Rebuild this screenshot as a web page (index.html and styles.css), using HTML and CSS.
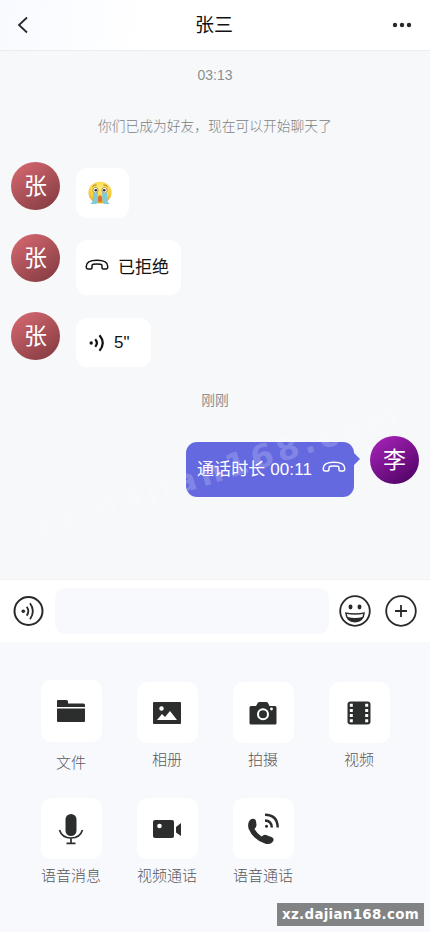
FILE: index.html
```html
<!DOCTYPE html>
<html lang="zh-CN">
<head>
<meta charset="utf-8">
<meta name="viewport" content="width=device-width, initial-scale=1">
<title>张三</title>
<link rel="stylesheet" href="styles.css">
</head>
<body>
<svg class="defs" width="0" height="0">
  <symbol id="handset" viewBox="0 0 24 12"><path d="M1.3 7.2C1.3 3 6 1.2 12 1.2S22.700 3 22.700 7.200V8.500Q22.700 9.900 21.300 9.900H18.200Q17 9.900 17 8.700V7Q17 5.600 15.700 5.300Q12 4.700 8.300 5.300Q7 5.600 7 7V8.700Q7 9.900 5.800 9.900H2.700Q1.300 9.900 1.300 8.500Z" fill="none" stroke="currentColor" stroke-width="1.500"/></symbol>
</svg>
<div class="app">
  <header class="header">
    <svg class="back" width="12" height="18" viewBox="0 0 12 18"><path d="M10 1.500L2 9L10 16.500"/></svg>
    <h1 class="title">张三</h1>
    <svg class="more" width="20" height="6" viewBox="0 0 20 6"><circle cx="3" cy="3" r="2.200"/><circle cx="10" cy="3" r="2.200"/><circle cx="17" cy="3" r="2.200"/></svg>
  </header>

  <main class="chat">
    <p class="note time">03:13</p>
    <p class="note notice">你们已成为好友，现在可以开始聊天了</p>
    <div class="message first">
      <div class="avatar">张</div>
      <div class="bubble emoji">
        <svg width="24" height="24" viewBox="0 0 24 24">
          <defs><radialGradient id="face" cx=".5" cy=".3" r=".7"><stop offset="0" stop-color="#ffed78"/><stop offset=".7" stop-color="#f8cf3d"/><stop offset="1" stop-color="#dca126"/></radialGradient></defs>
          <ellipse cx="12" cy="11.500" rx="11.500" ry="10.800" fill="url(#face)"/>
          <path d="M4.500 5.500Q6.500 3.500 8.500 4M15.500 4Q17.800 3.700 19.500 5.600" fill="none" stroke="#a97823"/>
          <ellipse cx="7.500" cy="9.200" rx="2.600" ry="2.800" fill="#fff" stroke="#8b743a" stroke-width=".7"/>
          <ellipse cx="16.500" cy="9.200" rx="2.600" ry="2.800" fill="#fff" stroke="#8b743a" stroke-width=".7"/>
          <circle cx="7.800" cy="9.200" r="1.300" fill="#342d24"/><circle cx="16.200" cy="9.200" r="1.300" fill="#342d24"/>
          <path d="M5 11.500Q7.500 13 9.800 11.500V18Q9.500 20 8.500 23H2.500Q5.500 20 5 17ZM14.200 11.500Q16.500 13 19 11.500V17Q18.500 20 21.500 23H15.500Q14.500 20 14.200 18Z" fill="#80cbd5"/>
          <path d="M10 16Q12 12.500 14 16V20Q12 22 10 20Z" fill="#e76c25"/>
        </svg>
      </div>
    </div>
    <div class="message second">
      <div class="avatar">张</div>
      <div class="bubble call"><svg width="24" height="12"><use href="#handset"/></svg><span>已拒绝</span></div>
    </div>
    <div class="message third">
      <div class="avatar">张</div>
      <div class="bubble voice">
        <svg width="16" height="18" viewBox="0 0 16 18"><circle cx="2.200" cy="9" r="1.700" fill="#111"/><path d="M6.200 5.200Q9.600 9 6.200 12.800M10.500 1.200Q17 9 10.500 16.800" fill="none" stroke="#111" stroke-width="2.200"/></svg><span>5"</span>
      </div>
    </div>
    <p class="note recent">刚刚</p>
    <div class="message own">
      <div class="bubble"><span>通话时长 00:11</span><svg width="24" height="12"><use href="#handset"/></svg></div>
      <div class="avatar">李</div>
    </div>
    <div class="watermark">xz.dajian168.com</div>
  </main>

  <section class="composer">
    <svg width="32" height="32" viewBox="0 0 32 32"><circle cx="16.500" cy="16" r="14" fill="none" stroke="#292929" stroke-width="2"/><circle cx="11.300" cy="16.300" r="1.800" fill="#292929"/><path d="M14.700 11.800Q18 16.200 14.700 20.600M18 8.300Q23.800 16.200 18 24.200" fill="none" stroke="#292929" stroke-width="1.800"/></svg>
    <div class="input"></div>
    <svg class="smile" width="32" height="32" viewBox="0 0 32 32"><circle cx="16" cy="16" r="14.800" fill="none" stroke="#292929" stroke-width="1.800"/><ellipse cx="11.500" cy="12" rx="2" ry="2.400" fill="#292929"/><ellipse cx="20.500" cy="12" rx="2" ry="2.400" fill="#292929"/><path d="M6 17.300Q16 19.300 26 17.300Q25 27.500 16 27.500T6 17.300Z" fill="#292929"/><path d="M7.800 19.100Q16 20.600 24.200 19.100L23.300 21.900Q16 23.900 8.700 21.900Z" fill="#fff"/></svg>
    <svg class="plus" width="32" height="32" viewBox="0 0 32 32"><circle cx="16" cy="16" r="14.800"/><path d="M10 16H22M16 10V22"/></svg>
  </section>

  <section class="tools">
    <div class="tool file">
      <div class="tile"><svg width="28" height="24" viewBox="0 0 28 24"><path d="M0 2Q0 1 1 1H9.500Q11 1 11 2.500V4.500H26.500Q28 4.500 28 6V8H0ZM0 9.500H28V22Q28 23 27 23H1Q0 23 0 22Z"/></svg></div><span>文件</span>
    </div>
    <div class="tool">
      <div class="tile"><svg width="28" height="22" viewBox="0 0 28 22"><rect width="28" height="22" rx="1"/><circle cx="8.500" cy="6.500" r="2.200" fill="#fff"/><path d="M4 18L9 12L12 15L17 9L24 18Z" fill="#fff"/></svg></div><span>相册</span>
    </div>
    <div class="tool">
      <div class="tile"><svg width="28" height="24" viewBox="0 0 28 24"><path d="M2 5H7L9 1.500Q9.500 1 10.500 1H17.500Q18.500 1 19 2L20.500 5H26Q27.500 5 27.500 6.500V22Q27.500 23.500 26 23.500H2Q.5 23.500 .5 22V6.500Q.5 5 2 5Z"/><circle cx="14" cy="13.300" r="5" fill="none" stroke="#fff" stroke-width="2"/><circle cx="22.500" cy="8" r="1.400" fill="#fff"/></svg></div><span>拍摄</span>
    </div>
    <div class="tool">
      <div class="tile"><svg width="24" height="24" viewBox="0 0 24 24"><rect x=".5" y=".5" width="23" height="23" rx="3"/><path d="M2.800 2.800h3v3h-3zm0 5.100h3v3h-3zm0 5.200h3v3h-3zm0 5.200h3v3h-3zM18.200 2.800h3v3h-3zm0 5.100h3v3h-3zm0 5.200h3v3h-3zm0 5.200h3v3h-3z" fill="#fff"/></svg></div><span>视频</span>
    </div>
    <div class="tool">
      <div class="tile"><svg width="26" height="32" viewBox="0 0 26 32"><rect x="7.500" y="1" width="11" height="22" rx="5.500"/><path d="M1.500 17Q4 25 13 25T24.500 17M13 25V30M8.500 30.300H17.500" fill="none" stroke="#2c2e2e" stroke-width="1.700"/></svg></div><span>语音消息</span>
    </div>
    <div class="tool">
      <div class="tile"><svg width="30" height="20" viewBox="0 0 30 20"><rect x="1" y="1" width="21" height="18" rx="2"/><circle cx="7.500" cy="7" r="2.300" fill="#fff"/><path d="M24 8L29 4V17L24 13.500Z"/></svg></div><span>视频通话</span>
    </div>
    <div class="tool">
      <div class="tile"><svg width="32" height="32" viewBox="0 0 32 32"><path d="M4.500 6Q8 5 9 8L9.500 12Q9.400 14.500 7.500 16Q10 20.500 14.500 23.500Q17 21.300 19 22L25 24.200Q27.500 25.500 26 28.500Q23.500 32 18.500 30.700Q6 27 1.500 15.500Q0 8.500 4.500 6Z"/><circle cx="19.500" cy="13.200" r="1.500"/><path d="M18 7.500Q24.500 7.700 24.800 14.500M18 1.800Q30.500 2 30.700 14.500" fill="none" stroke="#2c2e2e" stroke-width="2.500"/></svg></div><span>语音通话</span>
    </div>
  </section>
  <div class="site">xz.dajian168.com</div>
</div>
</body>
</html>
```
FILE: styles.css
```css
* { box-sizing: border-box; }
body {
  margin: 0;
  font-family: "Liberation Sans", "Noto Sans CJK SC", sans-serif;
  color: #111;
}
h1, p { margin: 0; }
svg { display: block; flex: none; }
.defs { position: absolute; }
.app {
  position: relative;
  display: flex;
  flex-direction: column;
  height: 932px;
  overflow: hidden;
  background: #f8f9fd;
}
.header {
  display: flex;
  align-items: center;
  justify-content: space-between;
  height: 51px;
  padding: 0 18px 1px 17px;
  background: linear-gradient(100deg, #f8faff, #fff 35%);
  border-bottom: 1px solid #ebedef;
}
.back { fill: none; stroke: #292929; stroke-width: 1.8; }
.title { font-size: 19px; font-weight: 400; line-height: 28px; margin-left: 7px; padding-top: 2px; }
.more { fill: #292929; }
.chat {
  position: relative;
  height: 528px;
  background: #f6f8fa;
}
.note {
  text-align: center;
  color: #8b8f91;
  font-size: 13.75px;
  line-height: 20px;
}
.time { padding-top: 14px; font-size: 14px; }
.notice { margin-top: 32px; font-weight: 300; color: #7c8082; }
.message { display: flex; padding: 0 11px; gap: 16px; }
.first { margin-top: 25px; height: 72px; }
.second { height: 78px; }
.third { height: 78px; }
.avatar {
  flex: none;
  width: 49px;
  height: 48px;
  border-radius: 50%;
  background: linear-gradient(145deg, #da6b73, #7f383e);
  color: #fff;
  font-size: 23px;
  line-height: 49px;
  text-align: center;
}
.bubble {
  display: flex;
  align-items: center;
  margin-top: 6px;
  border-radius: 11px;
  background: #fff;
  font-size: 17px;
}
.emoji { width: 53px; height: 50px; padding-left: 12px; }
.call { width: 105px; height: 55px; padding: 0 0 5px 9px; gap: 9px; }
.voice { width: 75px; height: 49px; padding-left: 13px; gap: 9px; }
.recent { padding-top: 1px; }
.own { justify-content: flex-end; margin-top: 25px; }
.own .bubble {
  position: relative;
  width: 168px;
  height: 55px;
  padding: 0 0 5px 11px;
  gap: 10px;
  background: #6569e0;
  color: #fff;
  white-space: nowrap;
}
.own .bubble span { letter-spacing: .1px; }
.own .bubble::after {
  content: "";
  position: absolute;
  top: 11px;
  right: -6px;
  border: 6px solid transparent;
  border-right: 0;
  border-left-color: #6569e0;
}
.own .avatar { background: linear-gradient(145deg, #ac25bd, #48005e); }
.watermark {
  position: absolute;
  left: 38px;
  top: 459px;
  transform: rotate(-17.5deg);
  transform-origin: 0 100%;
  font: bold 32px/36px "DejaVu Sans", sans-serif;
  letter-spacing: 4.5px;
  color: rgba(255, 255, 255, .2);
  white-space: nowrap;
}
.composer {
  display: flex;
  align-items: center;
  height: 63px;
  padding: 0 13px 0 12px;
  background: #fff;
  border-top: 1px solid #f0f2f3;
}
.input { width: 275px; height: 46px; margin: 0 10px 0 11px; border-radius: 10px; background: #f8f9fd; }
.smile { margin-right: 14px; }
.plus { fill: none; stroke: #292929; stroke-width: 1.8; }
.tools {
  display: grid;
  grid-template-columns: repeat(4, 96px);
  grid-template-rows: 116px 116px;
  padding: 40px 23px 0;
}
.tool {
  display: flex;
  flex-direction: column;
  align-items: center;
  color: #56585c;
  font-size: 15px;
  font-weight: 300;
  line-height: 22px;
}
.tile {
  display: flex;
  align-items: center;
  justify-content: center;
  width: 61px;
  height: 61px;
  margin-bottom: 6px;
  border-radius: 10px;
  background: #fff;
}
.tile svg { fill: #2c2e2e; }
.file .tile { height: 62px; margin: -2px 0 10px; }
.site {
  position: absolute;
  right: 6px;
  bottom: 6px;
  width: 147px;
  height: 23px;
  background: #818385;
  color: #fff;
  font: bold 13.4px/23px "DejaVu Sans", sans-serif;
  letter-spacing: .3px;
  text-align: center;
}
```
